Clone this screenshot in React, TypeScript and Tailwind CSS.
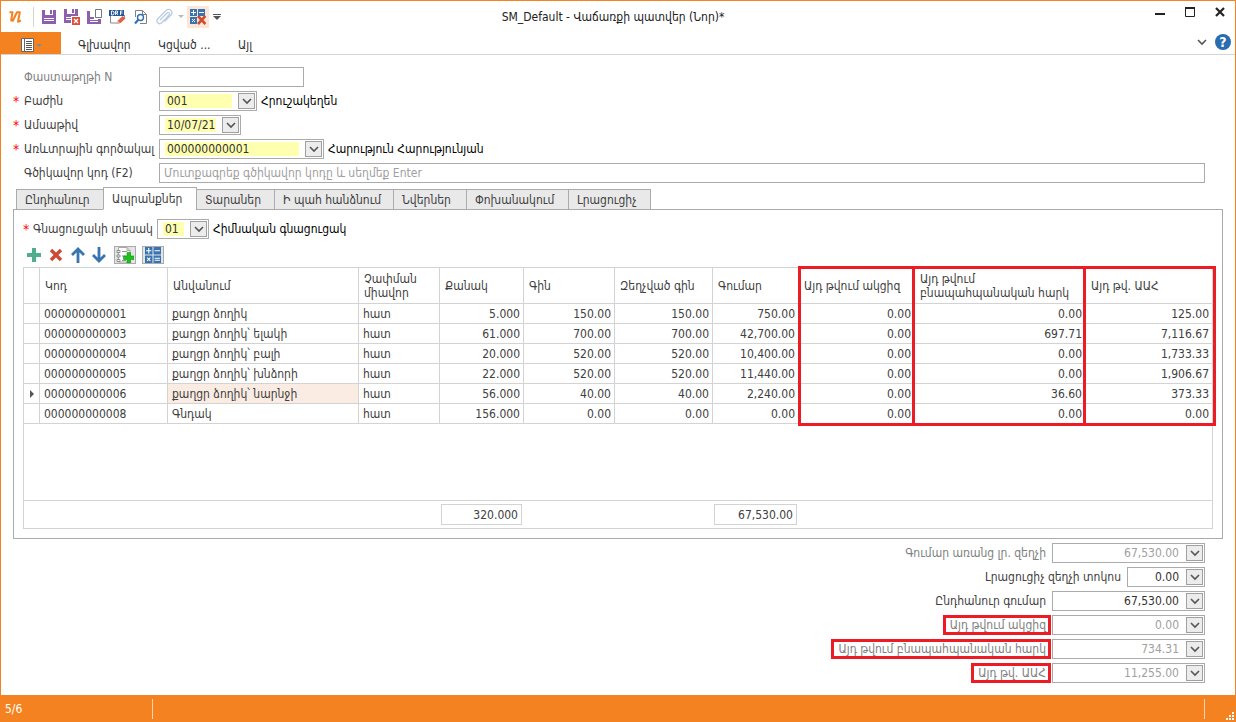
import React, { useState } from 'react';
import clsx from 'clsx';

interface ComboProps {
  id: string;
  label?: string;
  value: string;
  className: string;
  required?: boolean;
  muted?: boolean;
  numeric?: boolean;
}

interface TotalField {
  id: string;
  label: string;
  value: string;
  muted?: boolean;
  marked?: boolean;
  width: string;
}

const TABS = [
  { name: 'Ընդհանուր', width: 'w-[88px]' },
  { name: 'Ապրանքներ', width: 'w-[94px]' },
  { name: 'Տարաներ', width: 'w-[79px]' },
  { name: 'Ի պահ հանձնում', width: 'w-[120px]' },
  { name: 'Նվերներ', width: 'w-[74px]' },
  { name: 'Փոխանակում', width: 'w-[103px]' },
  { name: 'Լրացուցիչ', width: 'w-[83px]' },
];

const COLUMNS = [
  'Կոդ',
  'Անվանում',
  'Չափման միավոր',
  'Քանակ',
  'Գին',
  'Զեղչված գին',
  'Գումար',
  'Այդ թվում ակցիզ',
  'Այդ թվում բնապահպանական հարկ',
  'Այդ թվ. ԱԱՀ',
];

const ROWS = [
  ['000000000001', 'քաղցր ձողիկ', 'հատ', '5.000', '150.00', '150.00', '750.00', '0.00', '0.00', '125.00'],
  ['000000000003', 'քաղցր ձողիկ՝ ելակի', 'հատ', '61.000', '700.00', '700.00', '42,700.00', '0.00', '697.71', '7,116.67'],
  ['000000000004', 'քաղցր ձողիկ՝ բալի', 'հատ', '20.000', '520.00', '520.00', '10,400.00', '0.00', '0.00', '1,733.33'],
  ['000000000005', 'քաղցր ձողիկ՝ խնձորի', 'հատ', '22.000', '520.00', '520.00', '11,440.00', '0.00', '0.00', '1,906.67'],
  ['000000000006', 'քաղցր ձողիկ՝ նարնջի', 'հատ', '56.000', '40.00', '40.00', '2,240.00', '0.00', '36.60', '373.33'],
  ['000000000008', 'Գնդակ', 'հատ', '156.000', '0.00', '0.00', '0.00', '0.00', '0.00', '0.00'],
];

const TOTALS: TotalField[] = [
  { id: 'net', label: 'Գումար առանց լր. զեղչի', value: '67,530.00', muted: true, width: 'w-[153px]' },
  { id: 'discount', label: 'Լրացուցիչ զեղչի տոկոս', value: '0.00', width: 'w-[78px]' },
  { id: 'total', label: 'Ընդհանուր գումար', value: '67,530.00', width: 'w-[153px]' },
  { id: 'excise', label: 'Այդ թվում ակցիզ', value: '0.00', muted: true, marked: true, width: 'w-[153px]' },
  { id: 'eco', label: 'Այդ թվում բնապահպանական հարկ', value: '734.31', muted: true, marked: true, width: 'w-[153px]' },
  { id: 'vat', label: 'Այդ թվ. ԱԱՀ', value: '11,255.00', muted: true, marked: true, width: 'w-[153px]' },
];

const SaveIcon = () => (
  <svg width="14" height="14" viewBox="0 0 14 14">
    <path d="M0 0h14v14H0z" fill="#8d5fae" />
    <path d="M3 0h8v5H3zM2 8h10v1H2zM2 10h10v1H2z" fill="#fff" />
    <path d="M8 0h2v4H8z" fill="#8d5fae" />
  </svg>
);

const SaveCloseIcon = () => (
  <svg width="16" height="16" viewBox="0 0 16 16">
    <path d="M0 0h14v14H0z" fill="#8d5fae" />
    <path d="M3 0h8v5H3zM2 8h10v1H2zM2 10h10v1H2z" fill="#fff" />
    <path d="M8 0h2v4H8z" fill="#8d5fae" />
    <path d="M7 7h9v9H7z" fill="#fff" />
    <path d="M8 8h8v8H8z" fill="#d9543f" />
    <path d="m10 10 4 4m0-4-4 4" stroke="#fff" strokeWidth="1.3" />
  </svg>
);

const SaveNewIcon = () => (
  <svg width="16" height="16" viewBox="0 0 16 16">
    <path d="M0 2h14v13H0z" fill="#8d5fae" />
    <path d="M3 2h4v6H3zM3 10h8v1H3zM3 12h8v1H3z" fill="#fff" />
    <path d="M7 0h9v10H7z" fill="#fff" />
    <path d="M8.500 .5h6v8h-6z" fill="#fff" stroke="#777" />
  </svg>
);

const DraftIcon = () => (
  <svg width="17" height="16" viewBox="0 0 17 16">
    <path d="M1.500 6v8h8M15.500 6v3" fill="none" stroke="#888" />
    <path d="M0 1h15v6H0z" fill="#24579a" />
    <path
      d="M2.500 2v4h1.500l1-1V3L4 2zM6.500 6V2h2v2h-2m1 0 1.500 2M11.500 6V2h2m-2 2h2"
      fill="none"
      stroke="#fff"
      strokeWidth=".9"
    />
    <path d="m8 15 1-3.500 4.500-4.500 3 2.500-5 4.500z" fill="#e2604a" />
    <path d="m8 15 .8-3 2 2z" fill="#eac7a4" />
  </svg>
);

const PreviewIcon = () => (
  <svg width="14" height="16" viewBox="0 0 14 16">
    <path d="M1.500 8V1.500h7l4 4v9H6M8.500 1.500v4h4" fill="none" stroke="#808080" />
    <circle cx="6.500" cy="8.500" r="3" fill="#fff" stroke="#2f6fb2" strokeWidth="1.400" />
    <path d="m4.500 10.500-3.500 4" stroke="#2f6fb2" strokeWidth="2" />
  </svg>
);

const ClipIcon = () => (
  <svg width="18" height="18" viewBox="0 0 18 18" fill="none" stroke="#b9cde3" strokeWidth="1.300">
    <path d="m5 12 7-7c1.500-1.500 3.500.5 2 2L7 14.500c-3 3-7-1-4-4L11 2.500c3.500-3 8 1.500 5 4.500l-6.500 6.500" />
  </svg>
);

const CalcClearIcon = () => (
  <svg width="16" height="16" viewBox="0 0 16 16">
    <path d="M0 0h7v7H0zM8 0h7v7H8zM0 8h7v7H0z" fill="#3874b1" />
    <path d="M1 3.500h5M3.500 1v5M9 3.500h5" stroke="#fff" />
    <path d="m2 10 3 3m0-3-3 3" stroke="#fff" />
    <path d="m8 7 7.500 8m0-8L8 15" stroke="#cf4a35" strokeWidth="2.600" />
  </svg>
);

const CalcIcon = () => (
  <svg width="16" height="16" viewBox="0 0 15 15">
    <path d="M0 0h7v7H0zM8 0h7v7H8zM0 8h7v7H0zM8 8h7v7H8z" fill="#3874b1" />
    <path d="M1 3.500h5M3.500 1v5M9 3.500h5M9 10.500h5M9 12.500h5" stroke="#fff" />
    <path d="m2 10 3 3m0-3-3 3" stroke="#fff" />
  </svg>
);

const SheetAddIcon = () => (
  <svg width="18" height="16" viewBox="0 0 18 16">
    <path d="M2.500.5H11l3 3V15H2.500z" fill="#fff" stroke="#a8a8a8" />
    <path d="M11 .5v3h3" fill="none" stroke="#a8a8a8" />
    <path d="M1 3.500h3v2H1zM1 8h3v2H1zM1 12.500h3v2H1z" fill="#fff" stroke="#777" strokeWidth=".8" />
    <path d="M6 4.500h5M6 9h4M6 13.500h4" stroke="#8a9a8c" />
    <path d="M11 5.500h3.500V9H18v3.500h-3.500V16H11v-3.500H7.500V9H11z" fill="#1fc01f" stroke="#109510" strokeWidth=".6" />
  </svg>
);

const Chevron = () => (
  <svg width="10" height="7" viewBox="0 0 10 7">
    <path d="m1 1 4 4 4-4" fill="none" stroke="#555" strokeWidth="1.600" />
  </svg>
);

const DropButton = ({ label }: { label: string }) => (
  <button
    type="button"
    aria-label={label}
    className="flex h-4 w-[17px] shrink-0 items-center justify-center border border-[#a0a0a0] bg-[#ececec]"
  >
    <Chevron />
  </button>
);

const Combo: React.FC<ComboProps> = ({ id, label, value, className, required, muted, numeric }) => (
  <div className={clsx('flex h-5 items-center border border-[#ababab] bg-white pr-px', className)}>
    <input
      id={id}
      defaultValue={value}
      required={required}
      readOnly={muted}
      className={clsx(
        'h-[14px] min-w-0 flex-1 outline-none',
        required ? 'ml-[5px] mr-1.5 bg-[#ffffb0] pl-0.5' : 'mr-[7px] bg-transparent',
        numeric && 'text-right',
        muted ? 'text-[#a0a0a0]' : 'text-[#333]',
      )}
    />
    <DropButton label={label ?? value} />
  </div>
);

interface FieldProps {
  id: string;
  label: string;
  required?: boolean;
  muted?: boolean;
  note?: string;
  children: React.ReactNode;
}

const Field: React.FC<FieldProps> = ({ id, label, required, muted, note, children }) => (
  <div className="flex h-5 items-center">
    <span className="w-[11px] shrink-0 text-sm leading-none text-[#f00]">{required && '*'}</span>
    <label htmlFor={id} className={clsx('w-[135px] shrink-0 whitespace-nowrap', muted && 'text-[#808080]')}>
      {label}
    </label>
    {children}
    {note && <span className="ml-1 whitespace-nowrap text-black">{note}</span>}
  </div>
);

const TitleBar = () => (
  <header className="flex h-[31px] items-center">
    <div className="flex flex-1 items-center">
      <svg className="ml-2" width="13" height="16" viewBox="0 0 13 16">
        <path
          d="M.5 3.200h3L2.200 11.500l1.600.3L8 3.200h2.800L9 12.800l3-1.500"
          fill="none"
          stroke="#f58220"
          strokeWidth="2"
          strokeLinejoin="round"
        />
      </svg>
      <div className="ml-[11px] mr-[3px] h-5 w-px bg-[#d5d5d5]" />
      {[
        { name: 'Save', icon: <SaveIcon /> },
        { name: 'Save and close', icon: <SaveCloseIcon /> },
        { name: 'Save and new', icon: <SaveNewIcon /> },
        { name: 'Save draft', icon: <DraftIcon /> },
        { name: 'Preview', icon: <PreviewIcon /> },
        { name: 'Attach', icon: <ClipIcon /> },
      ].map((tool) => (
        <button key={tool.name} aria-label={tool.name} className="flex h-[22px] w-[23px] items-center justify-center">
          {tool.icon}
        </button>
      ))}
      <svg className="mx-[3px]" width="6" height="3" viewBox="0 0 6 3">
        <path d="M0 0h6L3 3z" fill="#bbb" />
      </svg>
      <button aria-label="Recalculate" className="flex size-[22px] items-center justify-center bg-[#fde6d6]">
        <CalcClearIcon />
      </button>
      <button aria-label="Customize" className="ml-1 flex h-[22px] w-2 items-center">
        <svg width="8" height="6" viewBox="0 0 8 6">
          <path d="M0 0h8v1H0zM0 2h8L4 6z" fill="#555" />
        </svg>
      </button>
    </div>
    <h1 className="whitespace-nowrap text-[#222]">SM_Default - Վաճառքի պատվեր (Նոր)*</h1>
    <div className="flex flex-1 items-center justify-end gap-5 pb-2 pr-2.5">
      <button aria-label="Minimize">
        <svg width="10" height="12" viewBox="0 0 10 12">
          <path d="M0 6h10v2H0z" fill="#222" />
        </svg>
      </button>
      <button aria-label="Maximize">
        <svg width="10" height="12" viewBox="0 0 10 12">
          <path d="M.5 .5h9v9h-9z" fill="none" stroke="#222" />
          <path d="M0 0h10v2H0z" fill="#222" />
        </svg>
      </button>
      <button aria-label="Close">
        <svg width="10" height="12" viewBox="0 0 10 12">
          <path d="m1 1 8 8m0-8-8 8" stroke="#222" strokeWidth="2.200" />
        </svg>
      </button>
    </div>
  </header>
);

const MenuBar = () => (
  <nav className="flex h-[23px] items-stretch border-b border-[#d5d5d5] text-[#333]">
    <button aria-label="File" className="flex w-[60px] items-center gap-0.5 bg-[#f58220] pl-5 pt-1">
      <svg width="13" height="14" viewBox="0 0 13 14">
        <path d="M.5.5h12v13H.5z" fill="#fff" stroke="#666" />
        <path d="M3.500 0v14" stroke="#666" />
        <path d="M5 3.500h6M5 5.500h6M5 7.500h6M5 9.500h6M5 11.500h6" stroke="#555" />
      </svg>
      <svg width="6" height="3" viewBox="0 0 6 3">
        <path d="M0 0h6L3 3z" fill="#8a8a8a" />
      </svg>
    </button>
    <div className="flex items-center whitespace-nowrap pl-[17px] pt-1">
      <button className="w-20 text-left">Գլխավոր</button>
      <button className="w-20 text-left">Կցված ...</button>
      <button className="text-left">Այլ</button>
    </div>
    <div className="ml-auto flex items-center gap-2 pb-0.5 pr-1">
      <button aria-label="Collapse">
        <Chevron />
      </button>
      <button
        aria-label="Help"
        className="flex size-4 items-center justify-center rounded-full bg-[#2a6cb0] text-sm font-bold leading-none text-white"
      >
        ?
      </button>
    </div>
  </nav>
);

const Toolbar = () => (
  <div className="mt-[5px] flex h-[22px] items-center pl-1">
    <button aria-label="Add" className="w-[22px]">
      <svg width="14" height="14" viewBox="0 0 14 14">
        <path d="M5 0h4v5h5v4H9v5H5V9H0V5h5z" fill="#4fae8b" />
      </svg>
    </button>
    <button aria-label="Delete" className="w-[22px]">
      <svg width="14" height="14" viewBox="0 0 14 14">
        <path d="m2 2 10 10m0-10L2 12" stroke="#cf4a35" strokeWidth="3.400" />
      </svg>
    </button>
    <button aria-label="Up" className="w-[21px]">
      <svg width="14" height="16" viewBox="0 0 14 16">
        <path d="M7 2v14M1 8l6-6 6 6" fill="none" stroke="#3874b1" strokeWidth="2.800" />
      </svg>
    </button>
    <button aria-label="Down" className="w-[22px]">
      <svg width="14" height="16" viewBox="0 0 14 16">
        <path d="M7 0v14M1 8l6 6 6-6" fill="none" stroke="#3874b1" strokeWidth="2.800" />
      </svg>
    </button>
    <button aria-label="Fill from list" className="flex h-[18px] w-[22px] items-center justify-center border border-[#ababab] bg-[#e4e4e4]">
      <SheetAddIcon />
    </button>
    <button
      aria-label="Calculate"
      className="ml-1.5 flex h-[18px] w-[22px] items-center justify-center border border-[#ababab] bg-[#e4e4e4]"
    >
      <CalcIcon />
    </button>
  </div>
);

const cell = 'border-b border-r border-[#d3d3d3]';

const ItemsGrid = () => (
  <div className="relative mt-px border-l border-t border-[#d3d3d3]">
    <table className="w-full table-fixed border-separate border-spacing-0">
      <colgroup>
        <col className="w-4" />
        <col className="w-[128px]" />
        <col className="w-[191px]" />
        <col className="w-[81px]" />
        <col className="w-[84px]" />
        <col className="w-[91px]" />
        <col className="w-[98px]" />
        <col className="w-[86px]" />
        <col className="w-[116px]" />
        <col className="w-[171px]" />
        <col />
      </colgroup>
      <thead>
        <tr className="h-9">
          <th className={cell} />
          {COLUMNS.map((name) => (
            <th key={name} className={clsx(cell, 'pl-[5px] text-left font-normal leading-[14px]')}>
              {name}
            </th>
          ))}
        </tr>
      </thead>
      <tbody>
        {ROWS.map((row) => {
          const current = row[0] === '000000000006';
          return (
            <tr key={row[0]} className="h-5 leading-4">
              <td className={cell}>
                {current && (
                  <svg className="ml-1.5" width="4" height="8" viewBox="0 0 4 8">
                    <path d="M0 0v8l4-4z" fill="#555" />
                  </svg>
                )}
              </td>
              {row.map((value, i) => (
                <td
                  key={i}
                  className={clsx(
                    cell,
                    'whitespace-nowrap',
                    i > 2 ? 'pr-[3px] text-right' : 'pl-1',
                    current && i === 1 && 'bg-[#faece3]',
                  )}
                >
                  {value}
                </td>
              ))}
            </tr>
          );
        })}
        <tr className="h-[77px]">
          <td colSpan={11} className={cell} />
        </tr>
      </tbody>
      <tfoot>
        <tr className="h-7">
          <td colSpan={4} className="border-b border-[#d3d3d3]" />
          <td className="border-b border-[#d3d3d3] pl-px pr-0.5">
            <div className="h-[21px] border border-[#d3d3d3] pr-[3px] text-right leading-5">320.000</div>
          </td>
          <td colSpan={2} className="border-b border-[#d3d3d3]" />
          <td className="border-b border-[#d3d3d3] pl-px pr-0.5">
            <div className="h-[21px] border border-[#d3d3d3] pr-[3px] text-right leading-5">67,530.00</div>
          </td>
          <td colSpan={3} className={cell} />
        </tr>
      </tfoot>
    </table>

    {/* Tax columns outline */}
    <div className="pointer-events-none absolute -right-[3px] -top-0.5 left-[774px] flex h-40 border-[3px] border-[#ed1c24]">
      <div className="w-[114px] border-r-[3px] border-[#ed1c24]" />
      <div className="w-[171px] border-r-[3px] border-[#ed1c24]" />
    </div>
  </div>
);

export default function App() {
  const [activeTab, setActiveTab] = useState('Ապրանքներ');

  return (
    <div className="flex min-h-screen flex-col border-x border-t border-[#f58220] bg-white font-['DejaVu_Sans_Condensed','DejaVu_Sans',sans-serif] text-xs text-[#404040]">
      <TitleBar />
      <MenuBar />

      <main className="flex-1 px-3 pt-3">
        <form className="flex flex-col gap-1 pr-[18px]">
          <Field id="doc" label="Փաստաթղթի N" muted>
            <input id="doc" className="h-5 w-[145px] border border-[#ababab] px-1 outline-none" />
          </Field>
          <Field id="dept" label="Բաժին" required note="Հրուշակեղեն">
            <Combo id="dept" value="001" className="w-[98px]" required />
          </Field>
          <Field id="date" label="Ամսաթիվ" required>
            <Combo id="date" value="10/07/21" className="w-[82px]" required />
          </Field>
          <Field id="agent" label="Առևտրային գործակալ" required note="Հարություն Հարությունյան">
            <Combo id="agent" value="000000000001" className="w-[165px]" required />
          </Field>
          <Field id="barcode" label="Գծիկավոր կոդ (F2)">
            <input
              id="barcode"
              placeholder="Մուտքագրեք գծիկավոր կոդը և սեղմեք Enter"
              className="h-5 min-w-0 flex-1 border border-[#ababab] px-1 outline-none placeholder:text-[#a0a0a0]"
            />
          </Field>
        </form>

        <div role="tablist" className="relative z-10 -mb-px mt-1 flex h-[23px] items-end pl-[3px]">
          {TABS.map((tab) => (
            <button
              key={tab.name}
              role="tab"
              aria-selected={tab.name === activeTab}
              onClick={() => setActiveTab(tab.name)}
              className={clsx(
                '-mr-px whitespace-nowrap border border-[#ababab] pl-2 text-left',
                tab.width,
                tab.name === activeTab ? 'h-[23px] border-b-white bg-white' : 'h-[21px] bg-[#e9e9e9]',
              )}
            >
              {tab.name}
            </button>
          ))}
        </div>

        <section className="border border-[#ababab] px-[9px] pb-[9px] pt-[9px]">
          <div className="flex h-5 items-center">
            <span className="w-2.5 shrink-0 text-sm leading-none text-[#f00]">*</span>
            <label htmlFor="pricelist" className="w-[124px] whitespace-nowrap">
              Գնացուցակի տեսակ
            </label>
            <Combo id="pricelist" value="01" className="w-[52px]" required />
            <span className="ml-1 text-black">Հիմնական գնացուցակ</span>
          </div>
          <Toolbar />
          <ItemsGrid />
        </section>

        <div className="mt-1 flex flex-col items-end gap-1 pr-[18px]">
          {TOTALS.map((field) => (
            <div key={field.id} className="flex h-5 items-center gap-px">
              <label
                htmlFor={field.id}
                className={clsx(
                  'whitespace-nowrap',
                  field.marked ? 'border-[3px] border-[#ed1c24] px-1 pr-0.5 leading-[14px]' : 'pr-[5px]',
                  field.muted && 'text-[#808080]',
                )}
              >
                {field.label}
              </label>
              <Combo id={field.id} value={field.value} muted={field.muted} numeric className={field.width} />
            </div>
          ))}
        </div>
      </main>

      <footer className="flex h-[27px] items-center bg-[#f58220] text-white">
        <span className="w-[151px] pl-1">5/6</span>
        <div className="h-5 w-px bg-[#fbd3ae]" />
        <div className="ml-auto mr-[21px] h-5 w-px bg-[#fbd3ae]" />
        <svg className="mb-0.5 mr-px self-end" width="8" height="8" viewBox="0 0 8 8">
          <path d="M6 0h2v2H6zM3 3h2v2H3zM6 3h2v2H6zM0 6h2v2H0zM3 6h2v2H3zM6 6h2v2H6z" fill="#fff" />
        </svg>
      </footer>
    </div>
  );
}
